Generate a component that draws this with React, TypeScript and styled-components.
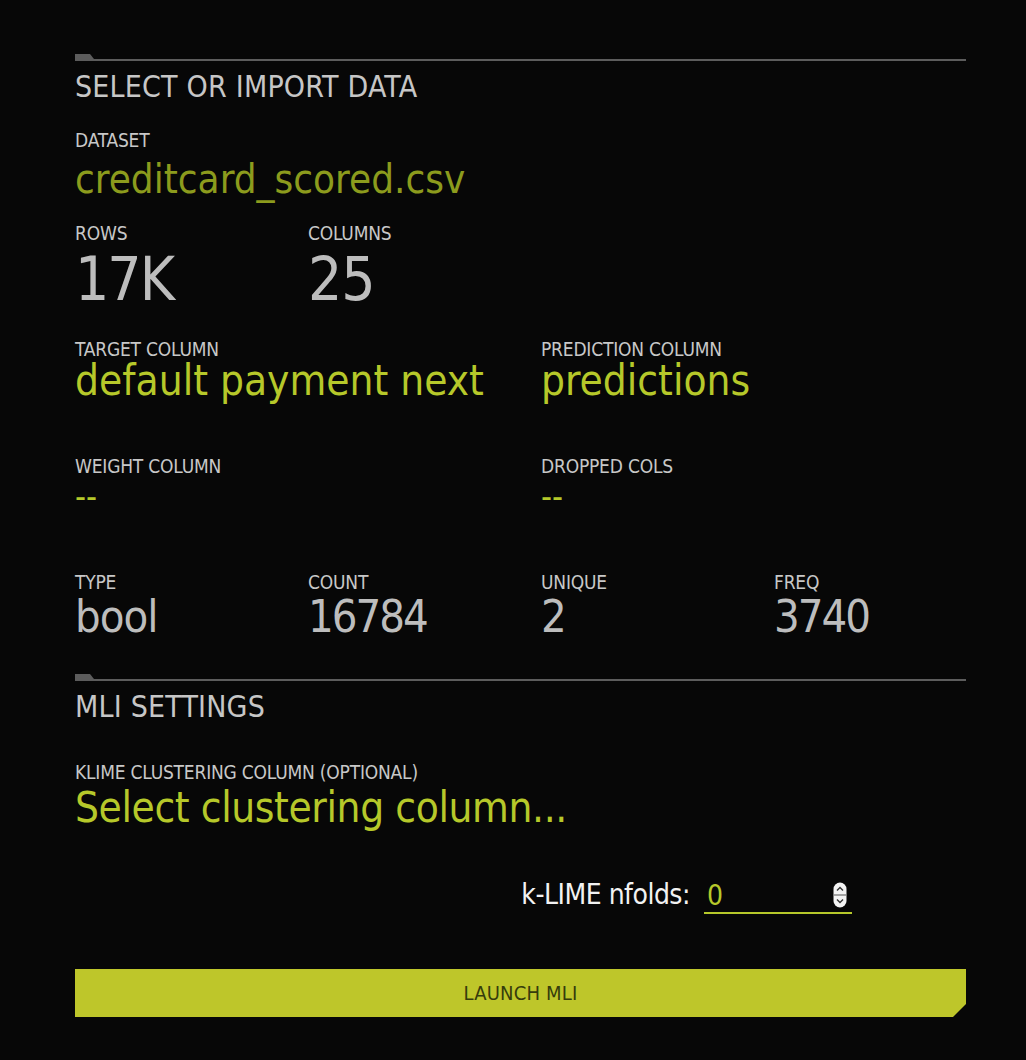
import React from 'react';
import styled, { createGlobalStyle } from 'styled-components';

const GlobalStyle = createGlobalStyle`
    html, body {
        margin: 0;
        padding: 0;
        background: #070707;
    }
    body {
        font-family: "DejaVu Sans Condensed", "Liberation Sans Narrow", "Roboto", sans-serif;
        font-stretch: condensed;
        color: #c4c4c4;
    }
`

const lime = '#b6c82a';

const Page = styled.div`
    width: 1026px;
    height: 1060px;
    box-sizing: border-box;
    padding: 54px 60px 0 75px;
`

const Section = styled.section`
    & + & {
        margin-top: 40px;
    }
`

const Rule = styled.div`
    position: relative;
    height: 2px;
    margin-top: 5px;
    background: #5c5c5c;

    &::before {
        content: "";
        position: absolute;
        left: 0;
        bottom: 2px;
        width: 19px;
        height: 5px;
        background: #5c5c5c;
        clip-path: polygon(0 0, 15px 0, 100% 100%, 0 100%);
    }
`

const Heading = styled.h2`
    margin: 11px 0 0 0;
    font-size: 30px;
    font-weight: 400;
    line-height: 1;
    letter-spacing: 0.2px;
    color: #c6c6c6;
`

const Row = styled.div<{ $top: number; $height?: number }>`
    display: grid;
    grid-template-columns: repeat(4, 233px);
    margin-top: ${p => p.$top}px;
    height: ${p => (p.$height ? `${p.$height}px` : 'auto')};
`

const Field = styled.div<{ $span?: number; $top?: number }>`
    display: flex;
    flex-direction: column;
    grid-column: span ${p => p.$span ?? 1};
    margin-top: ${p => p.$top ?? 0}px;
`

const Label = styled.span`
    font-size: 19px;
    line-height: 1;
    color: #c8c8c8;
    letter-spacing: -0.2px;
    white-space: nowrap;
`

const Value = styled.span<{ $tone?: 'grey' | 'lime' | 'olive'; $size: number; $top: number; $track?: number }>`
    margin-top: ${p => p.$top}px;
    font-size: ${p => p.$size}px;
    line-height: 1;
    letter-spacing: ${p => p.$track ?? 0}px;
    white-space: nowrap;
    color: ${p => (p.$tone === 'lime' ? lime : p.$tone === 'olive' ? '#8c9b1d' : '#bdbdbd')};
`

const NfoldsRow = styled.div`
    display: flex;
    justify-content: flex-end;
    align-items: flex-end;
    gap: 14px;
    margin: 51px 114px 0 0;
`

const NfoldsLabel = styled.label`
    font-size: 28px;
    line-height: 1;
    letter-spacing: -0.5px;
    color: #f2f2f2;
    padding-bottom: 5px;
`

const NumberBox = styled.div`
    display: flex;
    align-items: center;
    justify-content: space-between;
    width: 148px;
    height: 34px;
    box-sizing: border-box;
    padding: 0 5px 2px 3px;
    border-bottom: 2px solid ${lime};
    color: ${lime};
    font-size: 28px;
`

const Spinner = styled.svg`
    width: 14px;
    height: 26px;
`

const Launch = styled.button`
    display: block;
    width: 891px;
    height: 48px;
    margin-top: 55px;
    padding: 0;
    border: none;
    background: #bec62a;
    color: #363c0c;
    font-family: inherit;
    font-stretch: condensed;
    font-size: 20px;
    letter-spacing: 0.2px;
    clip-path: polygon(0 0, 100% 0, 100% 35px, calc(100% - 13px) 100%, 0 100%);
    cursor: pointer;
`

export default function App() {
    return (
        <>
            <GlobalStyle />
            <Page>
                <Section>
                    <Rule />
                    <Heading>SELECT OR IMPORT DATA</Heading>
                    <Field $top={29}>
                        <Label>DATASET</Label>
                        <Value $tone="olive" $size={40} $top={9}>creditcard_scored.csv</Value>
                    </Field>
                    <Row $top={25}>
                        <Field>
                            <Label>ROWS</Label>
                            <Value $size={60} $top={6} $track={-2}>17K</Value>
                        </Field>
                        <Field>
                            <Label>COLUMNS</Label>
                            <Value $size={60} $top={6} $track={-1}>25</Value>
                        </Field>
                    </Row>
                    <Row $top={31} $height={117}>
                        <Field $span={2}>
                            <Label>TARGET COLUMN</Label>
                            <Value $tone="lime" $size={42} $top={1}>default payment next</Value>
                        </Field>
                        <Field $span={2}>
                            <Label>PREDICTION COLUMN</Label>
                            <Value $tone="lime" $size={42} $top={1}>predictions</Value>
                        </Field>
                    </Row>
                    <Row $top={0} $height={116}>
                        <Field $span={2}>
                            <Label>WEIGHT COLUMN</Label>
                            <Value $tone="lime" $size={34} $top={3}>--</Value>
                        </Field>
                        <Field $span={2}>
                            <Label>DROPPED COLS</Label>
                            <Value $tone="lime" $size={34} $top={3}>--</Value>
                        </Field>
                    </Row>
                    <Row $top={0}>
                        <Field>
                            <Label>TYPE</Label>
                            <Value $size={45} $top={2} $track={-1}>bool</Value>
                        </Field>
                        <Field>
                            <Label>COUNT</Label>
                            <Value $size={45} $top={2} $track={-2}>16784</Value>
                        </Field>
                        <Field>
                            <Label>UNIQUE</Label>
                            <Value $size={45} $top={2}>2</Value>
                        </Field>
                        <Field>
                            <Label>FREQ</Label>
                            <Value $size={45} $top={2} $track={-2}>3740</Value>
                        </Field>
                    </Row>
                </Section>
                <Section>
                    <Rule />
                    <Heading>MLI SETTINGS</Heading>
                    <Field $top={41}>
                        <Label>KLIME CLUSTERING COLUMN (OPTIONAL)</Label>
                        <Value $tone="lime" $size={42} $top={5} $track={-0.4}>Select clustering column...</Value>
                    </Field>
                    <NfoldsRow>
                        <NfoldsLabel>k-LIME nfolds:</NfoldsLabel>
                        <NumberBox>
                            <span>0</span>
                            <Spinner viewBox="0 0 14 26">
                                <rect x="0.5" y="0.5" width="13" height="25" rx="6.5" fill="#f4f4f4" />
                                <line x1="1" y1="13" x2="13" y2="13" stroke="#555" strokeWidth="1" />
                                <path d="M4 8.5 L7 5.5 L10 8.5" fill="none" stroke="#333" strokeWidth="1.4" />
                                <path d="M4 17.5 L7 20.5 L10 17.5" fill="none" stroke="#333" strokeWidth="1.4" />
                            </Spinner>
                        </NumberBox>
                    </NfoldsRow>
                    <Launch>LAUNCH MLI</Launch>
                </Section>
            </Page>
        </>
    );
}
